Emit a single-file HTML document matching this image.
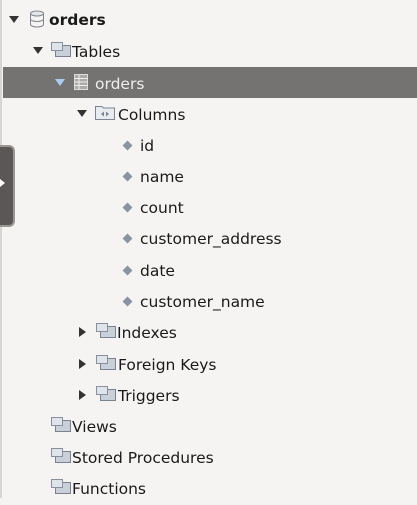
<!DOCTYPE html><html><head><style>
body{margin:0;width:417px;height:498px;background:#f5f4f2;font-family:"DejaVu Sans","Liberation Sans",sans-serif;font-size:15.5px;color:#1a1a1a;position:relative;overflow:hidden}
.r{position:absolute;height:31px;line-height:31px;white-space:nowrap;margin-top:2px}
.sel{position:absolute;left:3px;right:0;top:67px;height:31px;background:#747372}
.ar{position:absolute;width:0;height:0}
.dn{border-left:5px solid transparent;border-right:5px solid transparent;border-top:7px solid #333}
.rt{border-top:5px solid transparent;border-bottom:5px solid transparent;border-left:7px solid #333}
.ic{position:absolute;width:14px;height:10px;border:1px solid #7a8290;background:#c9d0da}
.ic:before{content:"";position:absolute;left:-5px;top:-4px;width:10px;height:7px;border:1px solid #8890a0;background:#dfe4ea}
.dm{position:absolute;width:7px;height:7px;background:#8a93a2;transform:rotate(45deg)}
</style></head><body>
<div style="position:absolute;left:0;top:0;bottom:0;width:2px;background:#d8d6d3"></div>
<div class="sel"></div>
<div style="position:absolute;left:0;top:145px;width:13px;height:78px;background:#5b5756;border:2px solid #9a9794;border-left:none;border-radius:0 6px 6px 0"></div>
<div style="position:absolute;left:0;top:179px;width:0;height:0;border-top:4px solid transparent;border-bottom:4px solid transparent;border-left:5px solid #fff"></div>

<div class="ar dn" style="left:9px;top:16px"></div>
<svg style="position:absolute;left:29px;top:10px" width="16" height="18"><ellipse cx="8" cy="3.5" rx="6.5" ry="2.5" fill="#e4e6ea" stroke="#808690"/><path d="M1.5 3.5V14.5A6.5 2.5 0 0 0 14.5 14.5V3.5M1.5 9A6.5 2.5 0 0 0 14.5 9" fill="none" stroke="#808690"/></svg>
<div class="r" style="left:49px;top:3px;font-weight:bold">orders</div>

<div class="ar dn" style="left:33px;top:47px"></div>
<div class="ic" style="left:55px;top:45px"></div>
<div class="r" style="left:72px;top:35px">Tables</div>

<div class="ar dn" style="left:55px;top:79px;border-top-color:#a8cdf0"></div>
<svg style="position:absolute;left:74px;top:74px" width="14" height="16"><rect x="0.5" y="0.5" width="13" height="15" fill="#aaa" stroke="#ddd"/><path d="M1 4.5H13M1 8H13M1 11.5H13M5 1V15" stroke="#eee"/></svg>
<div class="r" style="left:95px;top:67px;color:#eee">orders</div>

<div class="ar dn" style="left:77px;top:110px"></div>
<svg style="position:absolute;left:95px;top:104px" width="20" height="16"><path d="M0.5 2.5H7L8.5 4H19.5V15.5H0.5Z" fill="#e8ebef" stroke="#7d8592"/><path d="M6 10L9 7.5V12.5ZM14 10L11 7.5V12.5Z" fill="#7a8494"/></svg>
<div class="r" style="left:118px;top:98px">Columns</div>

<div class="dm" style="left:124px;top:142px"></div><div class="r" style="left:140px;top:129px">id</div>
<div class="dm" style="left:124px;top:173px"></div><div class="r" style="left:140px;top:160px">name</div>
<div class="dm" style="left:124px;top:204px"></div><div class="r" style="left:140px;top:191px">count</div>
<div class="dm" style="left:124px;top:235px"></div><div class="r" style="left:140px;top:222px">customer_address</div>
<div class="dm" style="left:124px;top:267px"></div><div class="r" style="left:140px;top:254px">date</div>
<div class="dm" style="left:124px;top:298px"></div><div class="r" style="left:140px;top:285px">customer_name</div>

<div class="ar rt" style="left:79px;top:327px"></div><div class="ic" style="left:100px;top:326px"></div><div class="r" style="left:117px;top:316px">Indexes</div>
<div class="ar rt" style="left:79px;top:359px"></div><div class="ic" style="left:100px;top:358px"></div><div class="r" style="left:118px;top:348px">Foreign Keys</div>
<div class="ar rt" style="left:79px;top:390px"></div><div class="ic" style="left:100px;top:389px"></div><div class="r" style="left:118px;top:379px">Triggers</div>

<div class="ic" style="left:55px;top:420px"></div><div class="r" style="left:72px;top:410px">Views</div>
<div class="ic" style="left:55px;top:451px"></div><div class="r" style="left:72px;top:441px">Stored Procedures</div>
<div class="ic" style="left:55px;top:482px"></div><div class="r" style="left:72px;top:472px">Functions</div>
</body></html>
